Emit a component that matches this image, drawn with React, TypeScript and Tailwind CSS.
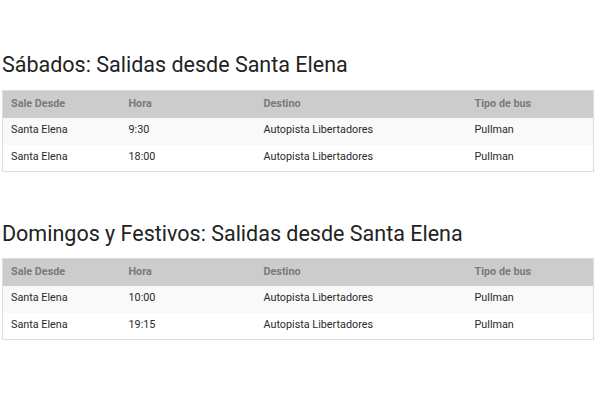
import React from "react";

type Row = { desde: string; hora: string; destino: string; tipo: string };

const sab: Row[] = [
  { desde: "Santa Elena", hora: "9:30", destino: "Autopista Libertadores", tipo: "Pullman" },
  { desde: "Santa Elena", hora: "18:00", destino: "Autopista Libertadores", tipo: "Pullman" },
];
const dom: Row[] = [
  { desde: "Santa Elena", hora: "10:00", destino: "Autopista Libertadores", tipo: "Pullman" },
  { desde: "Santa Elena", hora: "19:15", destino: "Autopista Libertadores", tipo: "Pullman" },
];

function Table({ rows }: { rows: Row[] }) {
  return (
    <table className="w-[591px] border-collapse border border-[#dddddd] text-[10.8px] table-fixed">
      <colgroup>
        <col className="w-[118px]" />
        <col className="w-[135px]" />
        <col className="w-[211px]" />
        <col className="w-[127px]" />
      </colgroup>
      <thead>
        <tr className="h-[27px] bg-[#cccccc] text-[#7a7a7a]">
          <th className="text-left font-bold pl-[8px] pb-[1px]">Sale Desde</th>
          <th className="text-left font-bold pl-[8px] pb-[1px]">Hora</th>
          <th className="text-left font-bold pl-[8px] pb-[1px]">Destino</th>
          <th className="text-left font-bold pl-[8px] pb-[1px]">Tipo de bus</th>
        </tr>
      </thead>
      <tbody className="text-[#2a2a2a]">
        {rows.map((r, i) => (
          <tr key={i} className={`h-[27px] ${i % 2 === 0 ? "bg-[#f9f9f9]" : "bg-white"}`}>
            <td className="pl-[8px] pb-[1px]">{r.desde}</td>
            <td className="pl-[8px] pb-[1px]">{r.hora}</td>
            <td className="pl-[8px] pb-[1px]">{r.destino}</td>
            <td className="pl-[8px] pb-[1px]">{r.tipo}</td>
          </tr>
        ))}
      </tbody>
    </table>
  );
}

export default function App() {
  return (
    <div className="w-[600px] h-[400px] bg-white pl-[2px] pt-[53px]" style={{ fontFamily: "Roboto, sans-serif" }}>
      <h2 className="text-[21.5px] leading-[24px] text-[#222222] mb-[13px]">Sábados: Salidas desde Santa Elena</h2>
      <Table rows={sab} />
      <h2 className="text-[21.5px] leading-[24px] text-[#222222] mt-[50px] mb-[12px]">Domingos y Festivos: Salidas desde Santa Elena</h2>
      <Table rows={dom} />
    </div>
  );
}
